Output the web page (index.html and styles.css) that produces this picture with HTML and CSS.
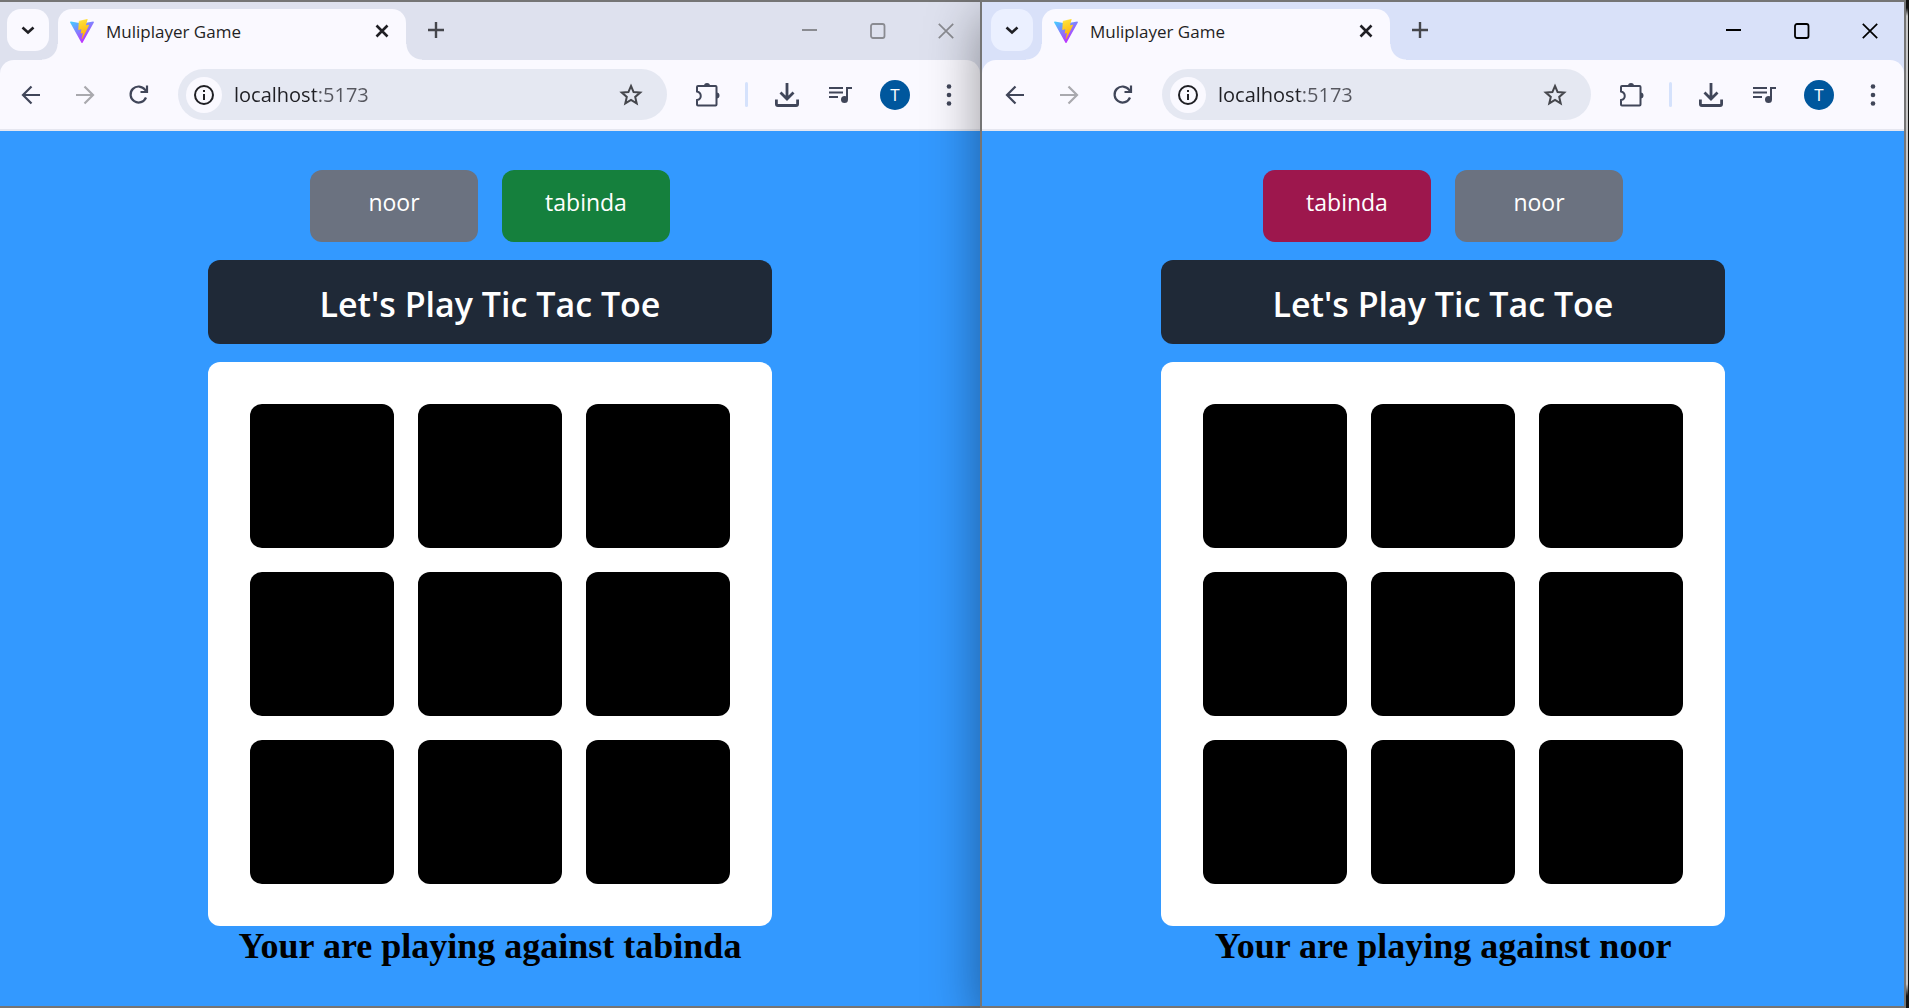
FILE: index.html
```html
<!DOCTYPE html>
<html lang="en">
<head>
<meta charset="utf-8">
<title>Muliplayer Game</title>
<link rel="stylesheet" href="styles.css">
</head>
<body>
<svg class="sprite" aria-hidden="true">
  <defs>
    <linearGradient id="vite-a" x1="0" y1="0" x2="0.6" y2="0.9"><stop offset="0" stop-color="#41d1ff"/><stop offset="1" stop-color="#bd34fe"/></linearGradient>
    <linearGradient id="vite-b" x1="0.4" y1="0" x2="0.6" y2="1"><stop offset="0" stop-color="#ffea83"/><stop offset="0.1" stop-color="#ffdd35"/><stop offset="1" stop-color="#ffa800"/></linearGradient>
  </defs>
  <symbol id="vite" viewBox="0 0 256 257"><path fill="url(#vite-a)" d="M255 38 134 253c-2 5-9 5-12 0L1 38c-3-5 2-11 8-10l119 21c1 0 2 0 2 0l117-21c6-1 10 5 8 10z"/><path fill="url(#vite-b)" d="M185 0 96 18c-1 0-2 1-2 3l-6 92c0 2 2 4 4 4l25-6c2-1 5 2 4 4l-7 36c-1 3 1 5 4 4l15-5c2-1 5 2 4 4l-12 57c-1 4 4 6 6 3l1-2 72-145c2-2-1-5-3-5l-26 5c-2 1-4-2-4-4l17-58c0-3-1-5-3-5z"/></symbol>
  <symbol id="chevron" viewBox="0 0 14 14"><path d="m1.500 4.500 5.500 5 5.500-5" fill="none" stroke="currentColor" stroke-width="2.600"/></symbol>
  <symbol id="tab-close" viewBox="0 0 14 14"><path d="m1.500 1.500 11 11m0-11-11 11" fill="none" stroke="currentColor" stroke-width="2.600"/></symbol>
  <symbol id="plus" viewBox="0 0 16 16"><path d="M8 0v16M0 8h16" fill="none" stroke="currentColor" stroke-width="2.400"/></symbol>
  <symbol id="min" viewBox="0 0 16 16"><path d="M0 7h15" fill="none" stroke="currentColor" stroke-width="2"/></symbol>
  <symbol id="max" viewBox="0 0 16 16"><rect x="1" y="1" width="13.500" height="14" rx="2" fill="none" stroke="currentColor" stroke-width="1.800"/></symbol>
  <symbol id="close" viewBox="0 0 16 16"><path d="m.8.8 14.400 14.400m0-14.400L.8 15.200" fill="none" stroke="currentColor" stroke-width="1.700"/></symbol>
  <symbol id="back" viewBox="0 0 20 20"><path d="M19 10H2m8.500-8.500L2 10l8.500 8.500" fill="none" stroke="currentColor" stroke-width="2.200"/></symbol>
  <symbol id="forward" viewBox="0 0 20 20"><path d="M1 10h17M9.500 1.500 18 10l-8.500 8.500" fill="none" stroke="currentColor" stroke-width="2.200"/></symbol>
  <symbol id="reload" viewBox="0 0 20 20"><path d="M17 12.500A8 8 0 1 1 16.200 5L18 7m0-6.500V7h-6.500" fill="none" stroke="currentColor" stroke-width="2.200"/></symbol>
  <symbol id="info" viewBox="0 0 20 20"><circle cx="10" cy="10" r="9" fill="none" stroke="currentColor" stroke-width="2"/><path d="M9 9h2v6H9zM9 5h2v2H9z" fill="currentColor"/></symbol>
  <symbol id="star" viewBox="0 0 24 24"><path d="m12 3 2.600 6.100 6.600.5-5 4.300 1.500 6.500-5.700-3.500-5.700 3.500 1.500-6.500-5-4.300 6.600-.5z" fill="none" stroke="currentColor" stroke-width="2"/></symbol>
  <symbol id="puzzle" viewBox="0 0 26 26"><path d="M2 5q0-1 1-1h17.500q1 0 1 1v17.500q0 1-1 1H3q-1 0-1-1V18c5-1 5-7 0-8.500z" fill="none" stroke="currentColor" stroke-width="2"/><path d="M9 4a3 3 0 0 1 6 0zM21.500 10.500a3 3 0 0 1 0 6z" fill="currentColor"/></symbol>
  <symbol id="download" viewBox="0 0 24 24"><path d="M12 0v16M5.500 9.500 12 16l6.500-6.500M1.400 16.500V21q0 1.500 1.500 1.500h18.200q1.500 0 1.500-1.500v-4.500" fill="none" stroke="currentColor" stroke-width="2.800"/></symbol>
  <symbol id="music" viewBox="0 0 24 20"><path d="M0 3h14M0 7.500h14M0 12h9" fill="none" stroke="currentColor" stroke-width="2"/><path d="M17 2h6v2h-4v10h-2z" fill="currentColor"/><circle cx="15.500" cy="14.500" r="3.500" fill="currentColor"/></symbol>
  <symbol id="dots" viewBox="0 0 6 22"><g fill="currentColor"><circle cx="3" cy="2.500" r="2.300"/><circle cx="3" cy="11" r="2.300"/><circle cx="3" cy="19.500" r="2.300"/></g></symbol>
</svg>

<div class="desktop">
  <section class="window window-back" aria-label="First player">
    <header class="chrome">
      <div class="tab-strip">
        <button class="tab-search" aria-label="Search tabs"><svg class="i14"><use href="#chevron"/></svg></button>
        <div class="tab">
          <svg class="i24"><use href="#vite"/></svg>
          <span class="tab-title">Muliplayer Game</span>
          <button class="tab-close" aria-label="Close tab"><svg class="i14"><use href="#tab-close"/></svg></button>
        </div>
        <button class="new-tab" aria-label="New tab"><svg class="i16"><use href="#plus"/></svg></button>
        <div class="controls">
          <button aria-label="Minimize"><svg class="i16"><use href="#min"/></svg></button>
          <button aria-label="Maximize"><svg class="i16"><use href="#max"/></svg></button>
          <button aria-label="Close"><svg class="i16"><use href="#close"/></svg></button>
        </div>
      </div>
      <div class="toolbar">
        <button class="tool" aria-label="Back"><svg class="i20"><use href="#back"/></svg></button>
        <button class="tool" aria-label="Forward" disabled><svg class="i20"><use href="#forward"/></svg></button>
        <button class="tool" aria-label="Reload"><svg class="i20"><use href="#reload"/></svg></button>
        <div class="omnibox">
          <button class="site-info" aria-label="Site information"><svg class="i20"><use href="#info"/></svg></button>
          <input class="address" type="text" value="localhost:5173" aria-label="Address">
          <button class="bookmark" aria-label="Bookmark"><svg class="i24"><use href="#star"/></svg></button>
        </div>
        <button class="tool" aria-label="Extensions"><svg class="i26"><use href="#puzzle"/></svg></button>
        <span class="divider"></span>
        <button class="tool" aria-label="Downloads"><svg class="i24"><use href="#download"/></svg></button>
        <button class="tool" aria-label="Media"><svg class="music"><use href="#music"/></svg></button>
        <button class="tool" aria-label="Profile"><span class="avatar">T</span></button>
        <button class="tool" aria-label="Menu"><svg class="dots"><use href="#dots"/></svg></button>
      </div>
    </header>
    <main class="game">
      <div class="players">
        <div class="player">noor</div>
        <div class="player turn-opponent">tabinda</div>
      </div>
      <h1 class="title">Let's Play Tic Tac Toe</h1>
      <div class="board">
        <button class="cell" aria-label="Cell 1"></button><button class="cell" aria-label="Cell 2"></button><button class="cell" aria-label="Cell 3"></button>
        <button class="cell" aria-label="Cell 4"></button><button class="cell" aria-label="Cell 5"></button><button class="cell" aria-label="Cell 6"></button>
        <button class="cell" aria-label="Cell 7"></button><button class="cell" aria-label="Cell 8"></button><button class="cell" aria-label="Cell 9"></button>
      </div>
      <h2 class="status">Your are playing against tabinda</h2>
    </main>
  </section>

  <section class="window window-front" aria-label="Second player">
    <header class="chrome">
      <div class="tab-strip">
        <button class="tab-search" aria-label="Search tabs"><svg class="i14"><use href="#chevron"/></svg></button>
        <div class="tab">
          <svg class="i24"><use href="#vite"/></svg>
          <span class="tab-title">Muliplayer Game</span>
          <button class="tab-close" aria-label="Close tab"><svg class="i14"><use href="#tab-close"/></svg></button>
        </div>
        <button class="new-tab" aria-label="New tab"><svg class="i16"><use href="#plus"/></svg></button>
        <div class="controls">
          <button aria-label="Minimize"><svg class="i16"><use href="#min"/></svg></button>
          <button aria-label="Maximize"><svg class="i16"><use href="#max"/></svg></button>
          <button aria-label="Close"><svg class="i16"><use href="#close"/></svg></button>
        </div>
      </div>
      <div class="toolbar">
        <button class="tool" aria-label="Back"><svg class="i20"><use href="#back"/></svg></button>
        <button class="tool" aria-label="Forward" disabled><svg class="i20"><use href="#forward"/></svg></button>
        <button class="tool" aria-label="Reload"><svg class="i20"><use href="#reload"/></svg></button>
        <div class="omnibox">
          <button class="site-info" aria-label="Site information"><svg class="i20"><use href="#info"/></svg></button>
          <input class="address" type="text" value="localhost:5173" aria-label="Address">
          <button class="bookmark" aria-label="Bookmark"><svg class="i24"><use href="#star"/></svg></button>
        </div>
        <button class="tool" aria-label="Extensions"><svg class="i26"><use href="#puzzle"/></svg></button>
        <span class="divider"></span>
        <button class="tool" aria-label="Downloads"><svg class="i24"><use href="#download"/></svg></button>
        <button class="tool" aria-label="Media"><svg class="music"><use href="#music"/></svg></button>
        <button class="tool" aria-label="Profile"><span class="avatar">T</span></button>
        <button class="tool" aria-label="Menu"><svg class="dots"><use href="#dots"/></svg></button>
      </div>
    </header>
    <main class="game">
      <div class="players">
        <div class="player turn-self">tabinda</div>
        <div class="player">noor</div>
      </div>
      <h1 class="title">Let's Play Tic Tac Toe</h1>
      <div class="board">
        <button class="cell" aria-label="Cell 1"></button><button class="cell" aria-label="Cell 2"></button><button class="cell" aria-label="Cell 3"></button>
        <button class="cell" aria-label="Cell 4"></button><button class="cell" aria-label="Cell 5"></button><button class="cell" aria-label="Cell 6"></button>
        <button class="cell" aria-label="Cell 7"></button><button class="cell" aria-label="Cell 8"></button><button class="cell" aria-label="Cell 9"></button>
      </div>
      <h2 class="status">Your are playing against noor</h2>
    </main>
  </section>
  <div class="backdrop-edge"></div>
</div>
</body>
</html>
```
FILE: styles.css
```css
* { box-sizing: border-box; }

body {
  margin: 0;
  font-family: "Open Sans", "Noto Sans", sans-serif;
  color: #1f1f24;
}

button {
  display: flex;
  align-items: center;
  justify-content: center;
  flex: none;
  margin: 0;
  padding: 0;
  border: 0;
  background: none;
  color: inherit;
  font: inherit;
}

svg { display: block; flex: none; }
.sprite { position: absolute; width: 0; height: 0; }
.i14 { width: 14px; height: 14px; }
.i16 { width: 16px; height: 16px; }
.i20 { width: 20px; height: 20px; }
.i24 { width: 24px; height: 24px; }
.i26 { width: 26px; height: 26px; }
.music { width: 24px; height: 20px; }
.dots { width: 6px; height: 22px; }

.desktop {
  display: flex;
  min-height: 100vh;
  overflow: hidden;
}

/* Browser windows */
.window {
  display: flex;
  flex-direction: column;
  min-width: 0;
  border: 0 solid #757575;
  border-width: 2px 0;
}

.window-back {
  --strip: #dee1ee;
  --search: #faf9ff;
  --control: #8a8b91;
  --inset: 0px;
  flex: 980 1 0;
}

.window-front {
  --strip: #d9e1f9;
  --search: #ebf0ff;
  --control: #000;
  --inset: 2px;
  position: relative;
  flex: 922 1 0;
  border-width: 2px;
  box-shadow: 0 16px 50px rgba(0, 0, 0, .4);
}

.backdrop-edge {
  position: relative;
  width: 3px;
  border-right: 1px solid #111;
  background: linear-gradient(#111 8px, #c8c8c8 16px, #c8c8c8 calc(100% - 24px), #111 calc(100% - 12px));
}

.chrome { background: var(--strip); }

.tab-strip {
  display: flex;
  height: 58px;
  padding: 7px 0 0 calc(7px + var(--inset));
}

.tab-search {
  width: 42px;
  height: 42px;
  border-radius: 14px;
  background: var(--search);
}

.tab {
  position: relative;
  display: flex;
  align-items: center;
  gap: 12px;
  width: 348px;
  margin-left: 9px;
  padding: 0 17px 8px 12px;
  border-radius: 14px 14px 0 0;
  background: #faf9ff;
}

.tab::before,
.tab::after {
  content: "";
  position: absolute;
  bottom: 0;
  width: 16px;
  height: 16px;
}

.tab::before {
  right: 100%;
  background: radial-gradient(circle at 0 0, transparent 15px, #faf9ff 16px);
}

.tab::after {
  left: 100%;
  background: radial-gradient(circle at 100% 0, transparent 15px, #faf9ff 16px);
}

.tab-title {
  flex: 1;
  padding-top: 2px;
  font-size: 17px;
  line-height: 24px;
}

.new-tab {
  width: 42px;
  height: 42px;
  margin-left: 9px;
  color: #45464c;
}

.controls {
  display: flex;
  height: 44px;
  margin-left: auto;
  color: var(--control);
}

.controls button { width: 68px; }

.toolbar {
  display: flex;
  align-items: center;
  height: 71px;
  padding: 0 4px 0 calc(4px + var(--inset));
  border-bottom: 2px solid #e6e7f0;
  border-radius: 14px 14px 0 0;
  background: #faf9ff;
  color: #404659;
}

.tool { width: 54px; height: 54px; }
.tool:disabled { color: #a9a9ae; }

.omnibox {
  display: flex;
  align-items: center;
  flex: 1;
  min-width: 0;
  height: 51px;
  margin: 0 14px 0 12px;
  padding: 0 24px 0 8px;
  border-radius: 26px;
  background: #e5e8f2;
}

.site-info {
  width: 36px;
  height: 36px;
  border-radius: 50%;
  background: #faf9ff;
  color: #1f1f24;
}

/* The port is dimmer than the host name */
.address {
  flex: 1;
  min-width: 0;
  height: 36px;
  margin-left: 12px;
  padding: 0;
  border: 0;
  outline: 0;
  background: linear-gradient(90deg, #1f1f24 82px, #55565e 82px) text;
  color: #1f1f24;
  font-family: inherit;
  font-size: 20px;
  -webkit-text-fill-color: transparent;
}

.bookmark { color: #45464c; }

.divider {
  width: 3px;
  height: 25px;
  margin: 0 12px 0 10px;
  border-radius: 2px;
  background: #d5e2fc;
}

.avatar {
  width: 30px;
  border-radius: 50%;
  background: #00579d;
  color: #fff;
  font-size: 17px;
  line-height: 30px;
}

/* Game page */
.game {
  display: flex;
  flex-direction: column;
  align-items: center;
  flex: 1;
  padding: 39px 16px 0;
  background: #3399ff;
}

.players { display: flex; gap: 24px; }

.player {
  width: 168px;
  height: 72px;
  padding-top: 15px;
  border-radius: 12px;
  background: #6b7280;
  color: #fff;
  font-size: 23px;
  line-height: 34px;
  text-align: center;
}

.turn-opponent { background: #15803d; }
.turn-self { background: #9d174d; }

.title {
  width: 100%;
  max-width: 564px;
  margin: 18px 0;
  padding: 22px 0 18px;
  border-radius: 12px;
  background: #1f2937;
  color: #fff;
  font-size: 34px;
  font-weight: 600;
  line-height: 44px;
  text-align: center;
}

.board {
  display: grid;
  grid-template-columns: repeat(3, 1fr);
  gap: 24px;
  width: 100%;
  max-width: 564px;
  padding: 42px;
  border-radius: 12px;
  background: #fff;
}

.cell {
  aspect-ratio: 1;
  border-radius: 12px;
  background: #000;
}

.status {
  margin: 0;
  color: #000;
  font-family: Georgia, "Liberation Serif", serif;
  font-size: 36px;
  font-weight: 700;
  line-height: 40px;
}
```
